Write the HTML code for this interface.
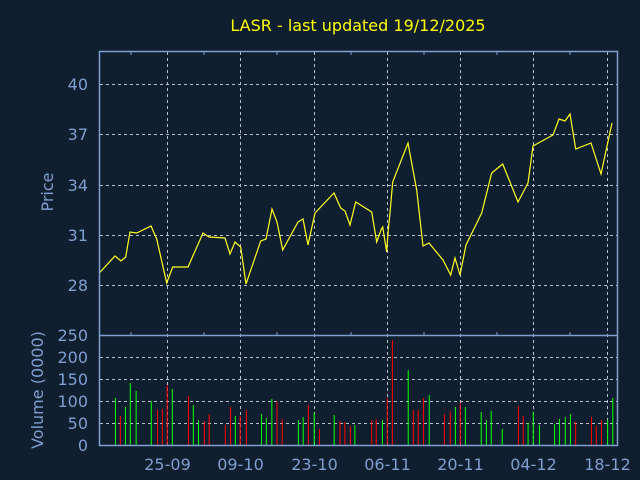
<!DOCTYPE html>
<html><head><meta charset="utf-8"><style>
html,body{margin:0;padding:0;background:#101f30;width:640px;height:480px;overflow:hidden}
svg{display:block}
text{font-family:"DejaVu Sans","Liberation Sans",sans-serif}
</style></head><body>
<svg width="640" height="480" viewBox="0 0 640 480" xmlns="http://www.w3.org/2000/svg">
<rect width="640" height="480" fill="#101f30"/>
<text x="358" y="31" fill="#ffff00" font-size="16" text-anchor="middle">LASR - last updated 19/12/2025</text>
<g stroke="#b8c0cc" stroke-width="1" stroke-dasharray="3,3" fill="none">
<line x1="100" y1="84.5" x2="617" y2="84.5"/><line x1="100" y1="134.5" x2="617" y2="134.5"/>
<line x1="100" y1="185.5" x2="617" y2="185.5"/><line x1="100" y1="235.5" x2="617" y2="235.5"/>
<line x1="100" y1="285.5" x2="617" y2="285.5"/>
<line x1="100" y1="357.5" x2="617" y2="357.5"/><line x1="100" y1="379.5" x2="617" y2="379.5"/>
<line x1="100" y1="401.5" x2="617" y2="401.5"/><line x1="100" y1="423.5" x2="617" y2="423.5"/>
<line x1="167.5" y1="52" x2="167.5" y2="445"/><line x1="240.5" y1="52" x2="240.5" y2="445"/>
<line x1="314.5" y1="52" x2="314.5" y2="445"/><line x1="387.5" y1="52" x2="387.5" y2="445"/>
<line x1="460.5" y1="52" x2="460.5" y2="445"/><line x1="533.5" y1="52" x2="533.5" y2="445"/>
<line x1="607.5" y1="52" x2="607.5" y2="445"/>
</g>
<g transform="translate(90 320) scale(0.3444 0.3333)" stroke-width="3" fill="none">
<g stroke="#00ff00">
<line x1="74" y1="376" x2="74" y2="234"/><line x1="103" y1="376" x2="103" y2="261"/><line x1="117" y1="376" x2="117" y2="189"/><line x1="134" y1="376" x2="134" y2="213"/><line x1="178" y1="376" x2="178" y2="244"/><line x1="239" y1="376" x2="239" y2="207"/><line x1="300" y1="376" x2="300" y2="255"/><line x1="315" y1="376" x2="315" y2="300"/><line x1="422" y1="376" x2="422" y2="288"/><line x1="498" y1="376" x2="498" y2="282"/><line x1="512" y1="376" x2="512" y2="294"/><line x1="528" y1="376" x2="528" y2="237"/><line x1="605" y1="376" x2="605" y2="300"/><line x1="619" y1="376" x2="619" y2="291"/><line x1="651" y1="376" x2="651" y2="278"/><line x1="709" y1="376" x2="709" y2="285"/><line x1="769" y1="376" x2="769" y2="315"/><line x1="849" y1="376" x2="849" y2="300"/><line x1="924" y1="376" x2="924" y2="150"/><line x1="985" y1="376" x2="985" y2="225"/><line x1="1061" y1="376" x2="1061" y2="261"/><line x1="1090" y1="376" x2="1090" y2="261"/><line x1="1136" y1="376" x2="1136" y2="276"/><line x1="1151" y1="376" x2="1151" y2="300"/><line x1="1165" y1="376" x2="1165" y2="273"/><line x1="1197" y1="376" x2="1197" y2="327"/><line x1="1272" y1="376" x2="1272" y2="309"/><line x1="1287" y1="376" x2="1287" y2="276"/><line x1="1305" y1="376" x2="1305" y2="315"/><line x1="1349" y1="376" x2="1349" y2="312"/><line x1="1363" y1="376" x2="1363" y2="297"/><line x1="1380" y1="376" x2="1380" y2="291"/><line x1="1395" y1="376" x2="1395" y2="282"/><line x1="1503" y1="376" x2="1503" y2="300"/><line x1="1518" y1="376" x2="1518" y2="234"/>
</g>
<g stroke="#ff0000">
<line x1="88" y1="376" x2="88" y2="288"/><line x1="196" y1="376" x2="196" y2="269"/><line x1="210" y1="376" x2="210" y2="267"/><line x1="224" y1="376" x2="224" y2="195"/><line x1="286" y1="376" x2="286" y2="228"/><line x1="332" y1="376" x2="332" y2="303"/><line x1="346" y1="376" x2="346" y2="282"/><line x1="393" y1="376" x2="393" y2="316"/><line x1="408" y1="376" x2="408" y2="261"/><line x1="436" y1="376" x2="436" y2="288"/><line x1="454" y1="376" x2="454" y2="270"/><line x1="543" y1="376" x2="543" y2="243"/><line x1="558" y1="376" x2="558" y2="297"/><line x1="634" y1="376" x2="634" y2="255"/><line x1="666" y1="376" x2="666" y2="327"/><line x1="726" y1="376" x2="726" y2="303"/><line x1="740" y1="376" x2="740" y2="306"/><line x1="756" y1="376" x2="756" y2="318"/><line x1="818" y1="376" x2="818" y2="300"/><line x1="831" y1="376" x2="831" y2="297"/><line x1="863" y1="376" x2="863" y2="234"/><line x1="878" y1="376" x2="878" y2="60"/><line x1="939" y1="376" x2="939" y2="270"/><line x1="953" y1="376" x2="953" y2="270"/><line x1="968" y1="376" x2="968" y2="234"/><line x1="1029" y1="376" x2="1029" y2="282"/><line x1="1046" y1="376" x2="1046" y2="273"/><line x1="1075" y1="376" x2="1075" y2="249"/><line x1="1244" y1="376" x2="1244" y2="258"/><line x1="1258" y1="376" x2="1258" y2="288"/><line x1="1410" y1="376" x2="1410" y2="306"/><line x1="1456" y1="376" x2="1456" y2="291"/><line x1="1470" y1="376" x2="1470" y2="318"/><line x1="1485" y1="376" x2="1485" y2="300"/>
</g>
</g>
<polyline fill="none" stroke="#ffff20" stroke-width="1.2" points="99.3,273 115,256 121,261 125.7,257 130,232 136.7,233 151,226 156.7,239 166.7,283 172.7,267 188,267 203,233 209,237 225,238 230,254 235,242 240.7,247 246,284 260.7,241 266,239 272,209 277,222 282.7,250 298,222 303,219 308,245 315,213 334,193 340.7,208 345,211 350,225 355.7,202 371.7,212 376.7,242 381,230 382.7,227 386.7,252 388,233 390,213 392.7,182 408,143 416.7,190 423,246 429,243 443,260 450.7,275 455,258 460,275 466,245 481.7,213 491.7,173 502.7,164 518,202 528,183 533,146 553,135 559,119 565,121 570,114 575.7,149 591,143 601,174 612,123"/>
<g stroke="#7f9fcf" stroke-width="1.5" fill="none">
<rect x="99.5" y="51.5" width="518" height="394"/>
<line x1="99.5" y1="335.5" x2="617.5" y2="335.5"/>
</g>
<g stroke="#7f9fcf" stroke-width="1">
<line x1="131" y1="52" x2="131" y2="55"/><line x1="204" y1="52" x2="204" y2="55"/><line x1="277" y1="52" x2="277" y2="55"/><line x1="351" y1="52" x2="351" y2="55"/><line x1="424" y1="52" x2="424" y2="55"/><line x1="497" y1="52" x2="497" y2="55"/><line x1="570" y1="52" x2="570" y2="55"/>
<line x1="131" y1="335" x2="131" y2="332"/><line x1="204" y1="335" x2="204" y2="332"/><line x1="277" y1="335" x2="277" y2="332"/><line x1="351" y1="335" x2="351" y2="332"/><line x1="424" y1="335" x2="424" y2="332"/><line x1="497" y1="335" x2="497" y2="332"/><line x1="570" y1="335" x2="570" y2="332"/>
</g>
<g fill="#7f9fcf" font-size="16" text-anchor="end">
<text x="88" y="90">40</text><text x="88" y="140">37</text><text x="88" y="191">34</text><text x="88" y="241">31</text><text x="88" y="291">28</text>
<text x="88" y="341">250</text><text x="88" y="363">200</text><text x="88" y="385">150</text><text x="88" y="407">100</text><text x="88" y="429">50</text><text x="88" y="451">0</text>
</g>
<g fill="#7f9fcf" font-size="16" text-anchor="middle">
<text x="167.5" y="470">25-09</text><text x="240.5" y="470">09-10</text><text x="314.5" y="470">23-10</text><text x="387.5" y="470">06-11</text><text x="460.5" y="470">20-11</text><text x="533.5" y="470">04-12</text><text x="607.5" y="470">18-12</text>
<text transform="translate(53 192) rotate(-90)">Price</text>
<text transform="translate(43 390) rotate(-90)">Volume (0000)</text>
</g>
</svg>
</body></html>
